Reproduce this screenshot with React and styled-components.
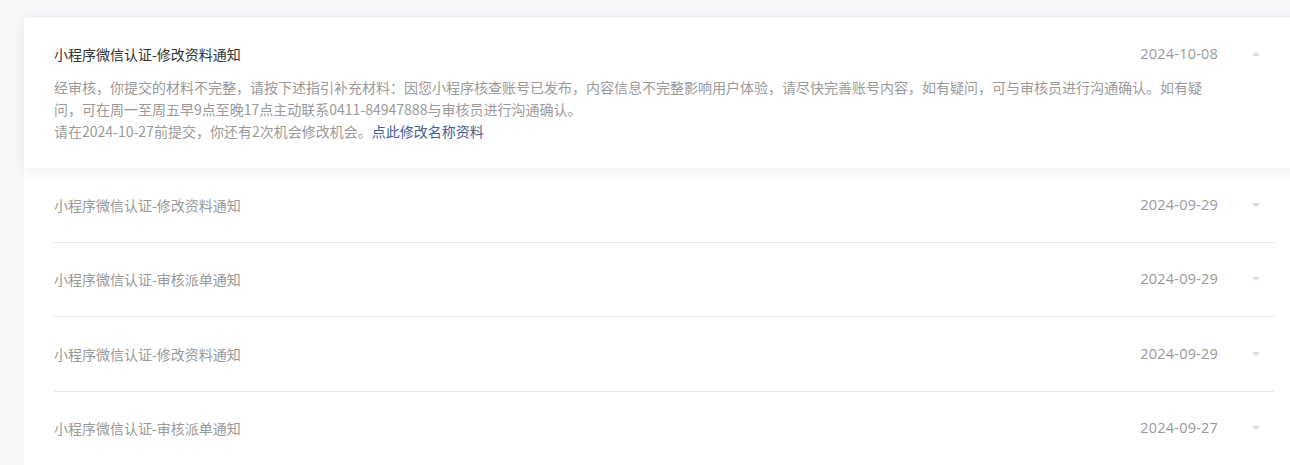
import React from 'react';
import styled, { createGlobalStyle } from 'styled-components';

const GlobalStyle = createGlobalStyle`
	html, body {
		margin: 0;
		padding: 0;
		background: #f7f8fa;
		overflow: hidden;
	}
	body {
		font-family: "Noto Sans CJK SC", "Noto Sans", sans-serif;
		-webkit-font-smoothing: antialiased;
	}
`;

const Page = styled.div`
	width: 1290px;
	height: 465px;
	padding: 18px 0 0 24px;
	box-sizing: border-box;
	overflow: hidden;
`;

const Panel = styled.div`
	width: 1280px;
	min-height: 460px;
	background: #fff;
`;

const Item = styled.div`
	padding: 0 30px;
	box-sizing: border-box;
	background: #fff;
	${p =>
		p.open &&
		`
		position: relative;
		z-index: 1;
		box-shadow: 0 2px 14px rgba(30, 40, 70, 0.08);
		padding-top: 26px;
		padding-bottom: 26px;
	`}
`;

const Inner = styled.div`
	width: 1220px;
	${p =>
		!p.open &&
		`
		height: 74.5px;
		border-bottom: 1px solid #e8e8e8;
		box-sizing: border-box;
		display: flex;
		flex-direction: column;
		justify-content: center;
	`}
`;

const Header = styled.div`
	display: flex;
	align-items: center;
	height: 20px;
`;

const Title = styled.div`
	flex: 1;
	font-size: 14px;
	line-height: 20px;
	color: ${p => (p.open ? '#333' : '#999')};
`;

const Date = styled.div`
	font-family: "Open Sans", "Noto Sans", sans-serif;
	font-size: 14.5px;
	line-height: 20px;
	color: #9a9a9a;
	letter-spacing: 0.2px;
`;

const Arrow = styled.span`
	width: 0;
	height: 0;
	margin: 0 14px 0 34px;
	border-left: 4px solid transparent;
	border-right: 4px solid transparent;
	${p =>
		p.up
			? 'border-bottom: 4px solid #dcdcdc;'
			: 'border-top: 4px solid #dcdcdc;'}
`;

const Body = styled.div`
	margin-top: 12px;
	width: 1158px;
	font-size: 14px;
	line-height: 22px;
	color: #9a9a9a;
`;

const Link = styled.a`
	color: #44609a;
	text-decoration: none;
	cursor: pointer;
`;

const rows = [
	{ title: '小程序微信认证-修改资料通知', date: '2024-09-29' },
	{ title: '小程序微信认证-审核派单通知', date: '2024-09-29' },
	{ title: '小程序微信认证-修改资料通知', date: '2024-09-29' },
	{ title: '小程序微信认证-审核派单通知', date: '2024-09-27' }
];

const App = () => (
	<Page>
		<GlobalStyle />
		<Panel>
			<Item open>
				<Inner open>
					<Header>
						<Title open>小程序微信认证-修改资料通知</Title>
						<Date>2024-10-08</Date>
						<Arrow up />
					</Header>
					<Body>
						经审核，你提交的材料不完整，请按下述指引补充材料：因您小程序核查账号已发布，内容信息不完整影响用户体验，请尽快完善账号内容，如有疑问，可与审核员进行沟通确认。如有疑问，可在周一至周五早9点至晚17点主动联系0411-84947888与审核员进行沟通确认。
						<br />
						请在2024-10-27前提交，你还有2次机会修改机会。
						<Link>点此修改名称资料</Link>
					</Body>
				</Inner>
			</Item>
			{rows.map((row, i) => (
				<Item key={`row-${i}`}>
					<Inner>
						<Header>
							<Title>{row.title}</Title>
							<Date>{row.date}</Date>
							<Arrow />
						</Header>
					</Inner>
				</Item>
			))}
		</Panel>
	</Page>
);

export default App;
